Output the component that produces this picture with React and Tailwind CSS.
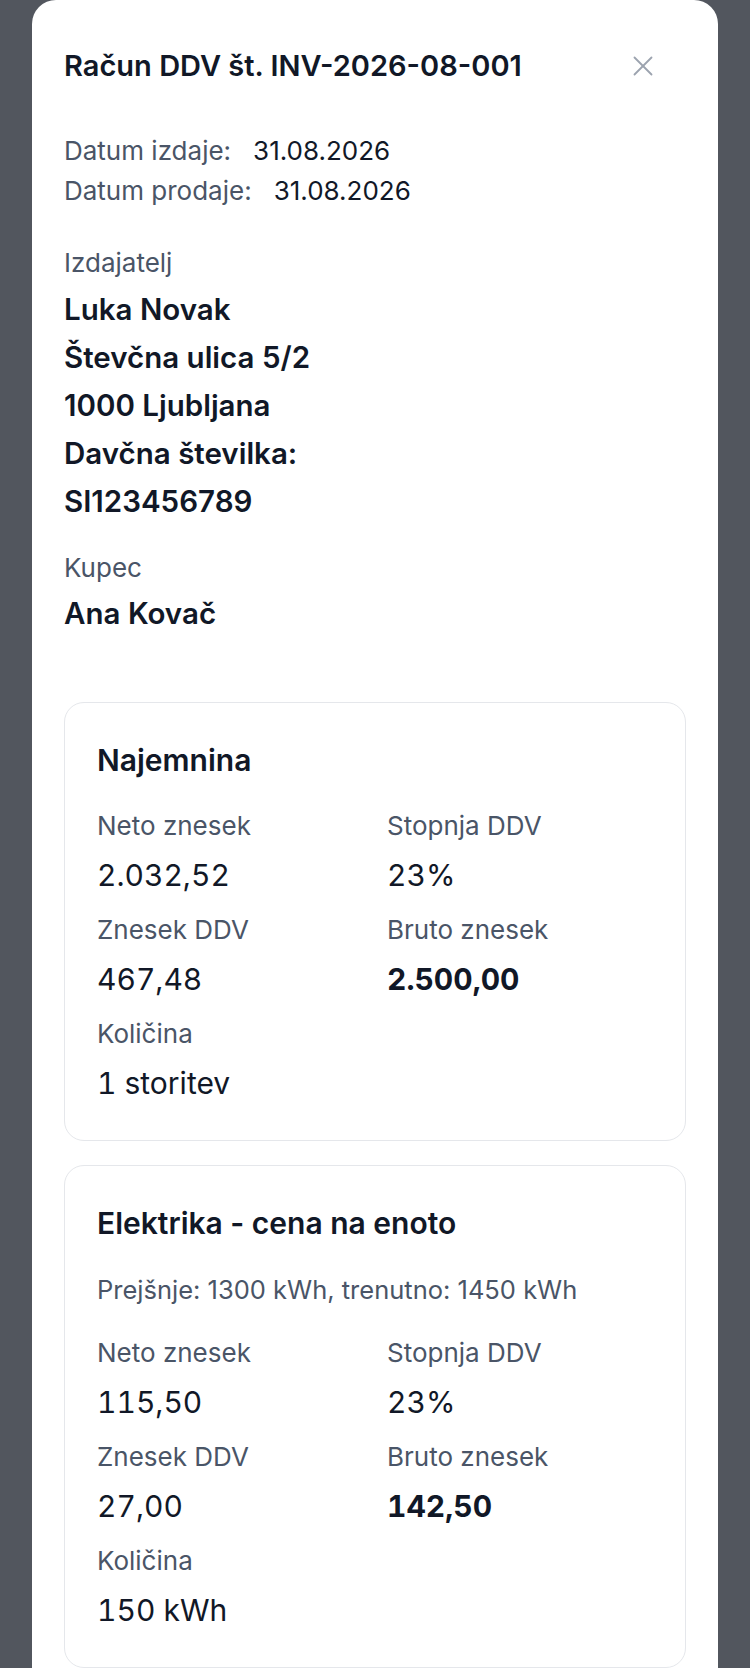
import { X } from 'lucide-react'

const font = { fontFamily: 'Inter, Lato, sans-serif' }

const Cell = ({ label, value, strong }) => (
  <div className="flex flex-col">
    <span className="text-[26px] leading-[40px] text-[#4a5567]">{label}</span>
    <span
      className={`mt-[7px] text-[30px] leading-[44px] tabular-nums text-[#111827] ${strong ? 'font-bold' : ''}`}
    >
      {value}
    </span>
  </div>
)

const LineCard = ({ title, note, rows }) => (
  <div className="rounded-[20px] border border-[#e5e7eb] px-8 pt-9 pb-[35px]">
    <h3 className="text-[30px] leading-[42px] font-semibold text-[#111827]">{title}</h3>
    {note && <p className="mt-[28px] text-[25.5px] leading-[36px] text-[#4a5567]">{note}</p>}
    <div className="mt-[25px] grid grid-cols-2 gap-x-6 gap-y-[13px]">
      {rows.map((r) => (
        <Cell key={r.label} {...r} />
      ))}
    </div>
  </div>
)

export default function App() {
  return (
    <div className="min-h-[1668px] bg-[#52565e] px-8" style={font}>
      <div className="min-h-[1668px] rounded-t-3xl bg-white px-8 pt-[46px]">
        {/* header */}
        <div className="flex items-center justify-between">
          <h2 className="text-[29px] leading-[40px] font-semibold text-[#111827]">Račun DDV št. INV-2026-08-001</h2>
          <button className="mr-[26px] text-[#9ca3af]">
            <X size={34} strokeWidth={1.3} />
          </button>
        </div>

        {/* dates */}
        <div className="mt-[45px] text-[26px] leading-[40px]">
          <div>
            <span className="text-[#4a5567]">Datum izdaje:</span>
            <span className="ml-[22px] text-[#111827]">31.08.2026</span>
          </div>
          <div>
            <span className="text-[#4a5567]">Datum prodaje:</span>
            <span className="ml-[22px] text-[#111827]">31.08.2026</span>
          </div>
        </div>

        {/* issuer */}
        <div className="mt-8">
          <div className="text-[26px] leading-[40px] text-[#4a5567]">Izdajatelj</div>
          <div className="mt-[2px] text-[29.5px] leading-[48px] font-semibold text-[#111827]">
            <div>Luka Novak</div>
            <div>Števčna ulica 5/2</div>
            <div>1000 Ljubljana</div>
            <div>Davčna številka:</div>
            <div>SI123456789</div>
          </div>
        </div>

        {/* buyer */}
        <div className="mt-[23px]">
          <div className="text-[26px] leading-[40px] text-[#4a5567]">Kupec</div>
          <div className="mt-[1px] text-[29.5px] leading-[48px] font-semibold text-[#111827]">Ana Kovač</div>
        </div>

        <div className="mt-[65px] flex flex-col gap-6">
          <LineCard
            title="Najemnina"
            rows={[
              { label: 'Neto znesek', value: '2.032,52' },
              { label: 'Stopnja DDV', value: '23%' },
              { label: 'Znesek DDV', value: '467,48' },
              { label: 'Bruto znesek', value: '2.500,00', strong: true },
              { label: 'Količina', value: '1 storitev' },
            ]}
          />
          <LineCard
            title="Elektrika - cena na enoto"
            note="Prejšnje: 1300 kWh, trenutno: 1450 kWh"
            rows={[
              { label: 'Neto znesek', value: '115,50' },
              { label: 'Stopnja DDV', value: '23%' },
              { label: 'Znesek DDV', value: '27,00' },
              { label: 'Bruto znesek', value: '142,50', strong: true },
              { label: 'Količina', value: '150 kWh' },
            ]}
          />
        </div>
      </div>
    </div>
  )
}
